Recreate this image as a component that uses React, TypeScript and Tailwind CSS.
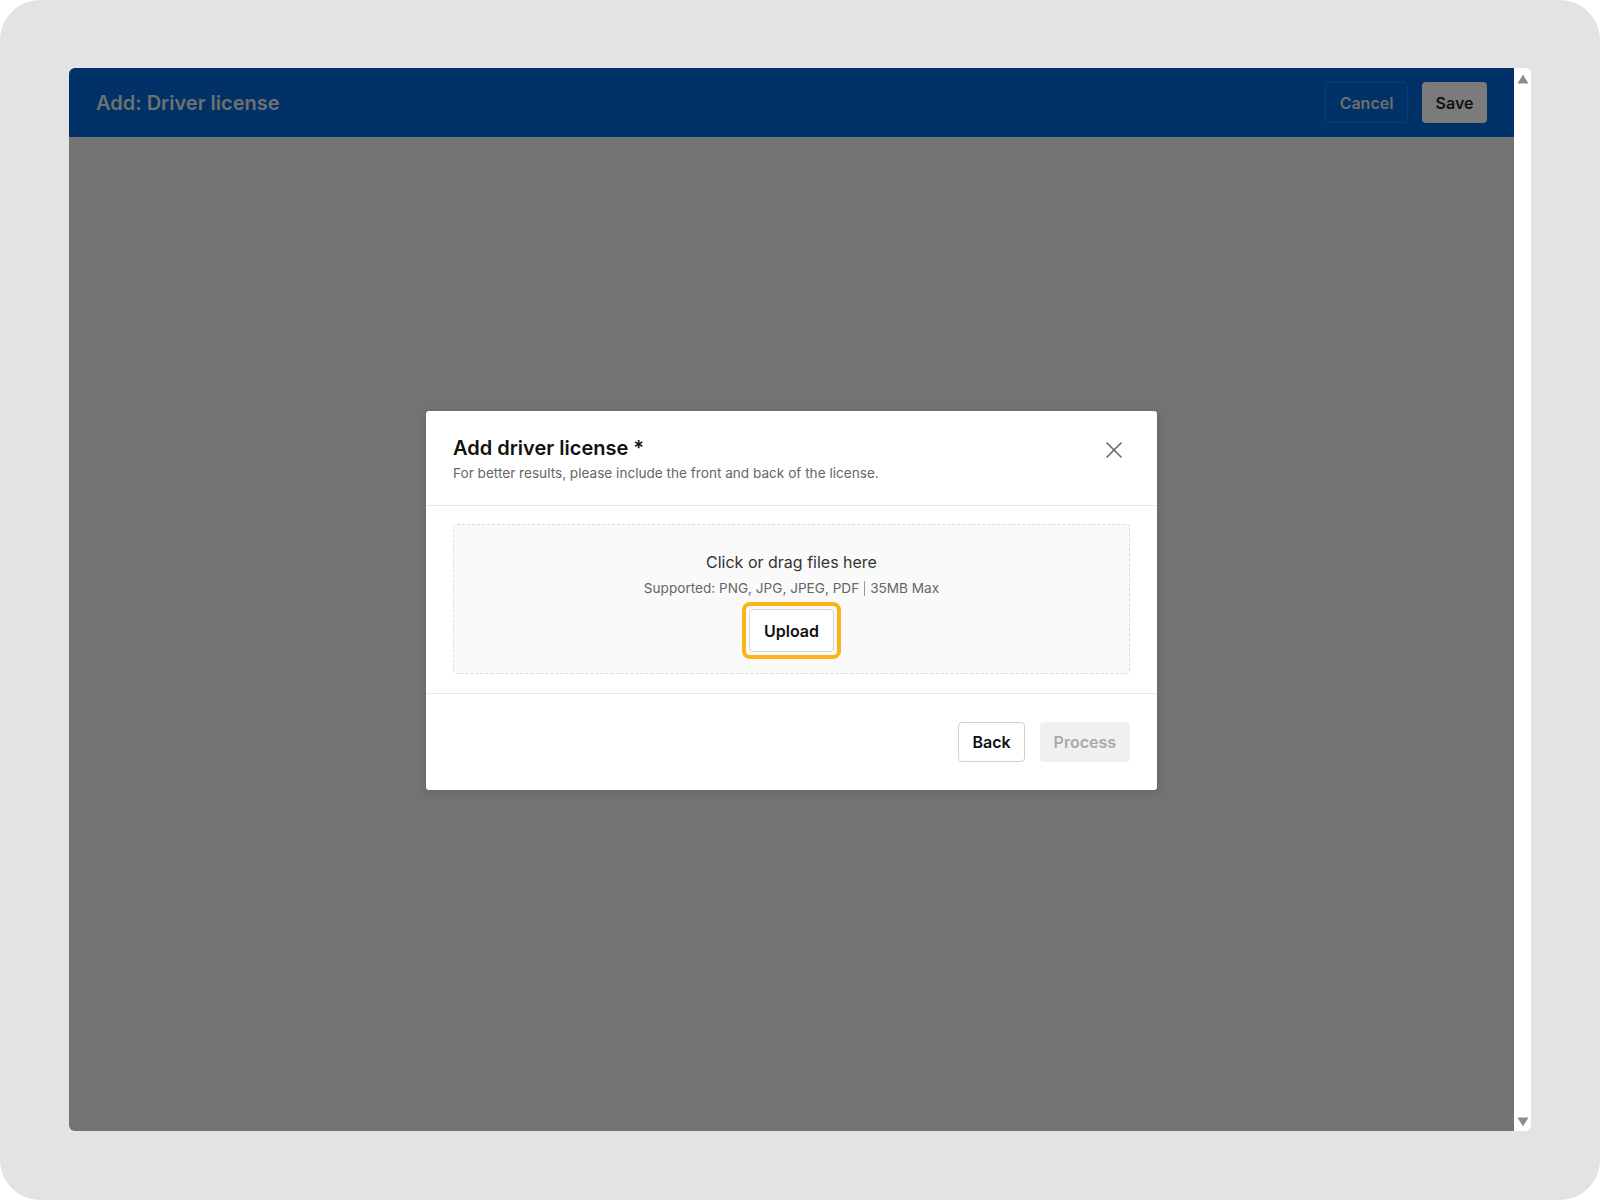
import { X } from "lucide-react";

function Scrollbar() {
  return (
    <div className="w-[17px] bg-white rounded-r-[6px] flex flex-col items-center justify-between pt-[6px] pb-[4px]">
      <svg width="12" height="10" viewBox="0 0 12 10">
        <path d="M6 0.5 L11.5 9.5 L0.5 9.5 Z" fill="#8c8c8c" />
      </svg>
      <svg width="12" height="10" viewBox="0 0 12 10">
        <path d="M0.5 0.5 L11.5 0.5 L6 9.5 Z" fill="#8c8c8c" />
      </svg>
    </div>
  );
}

function UploadModal() {
  return (
    <div className="w-[731px] bg-white rounded-[3px] shadow-[0_2px_8px_rgba(0,0,0,0.15)]">
      {/* Header */}
      <div className="flex items-start justify-between pl-[27px] pr-[29px] pt-[23px] pb-[23px] border-b border-[#e9e9e9]">
        <div>
          <h2 className="text-[20px] leading-[28px] font-semibold text-[#111]">
            Add driver license *
          </h2>
          <p className="mt-[2px] text-[13.6px] leading-[18px] text-[#666]">
            For better results, please include the front and back of the license.
          </p>
        </div>
        <button className="mt-[2px] text-[#666]">
          <X className="w-[28px] h-[28px]" strokeWidth={1.4} />
        </button>
      </div>

      {/* Body */}
      <div className="px-[27px] pt-[18px] pb-[19px] border-b border-[#e9e9e9]">
        <div className="h-[150px] bg-[#fafafa] border border-dashed border-[#dcdcdc] rounded-[4px] flex flex-col items-center pt-[25px]">
          <div className="text-[16px] leading-[24px] text-[#333]">
            Click or drag files here
          </div>
          <div className="mt-[5px] text-[13.6px] leading-[18px] text-[#666] flex items-center">
            <span>Supported: PNG, JPG, JPEG, PDF</span>
            <span className="mx-[5px] w-px h-[15px] bg-[#999]" />
            <span>35MB Max</span>
          </div>
          <div className="mt-[5px] border-[4px] border-[#fbb417] rounded-[8px] p-[3px]">
            <button className="h-[43px] px-[14px] bg-white border border-[#d6d6d6] rounded-[4px] text-[16px] font-semibold text-[#111]">
              Upload
            </button>
          </div>
        </div>
      </div>

      {/* Footer */}
      <div className="flex justify-end gap-[15px] px-[27px] pt-[28px] pb-[28px]">
        <button className="h-[40px] px-[13px] bg-white border border-[#cfcfcf] rounded-[4px] text-[16px] font-semibold text-[#111]">
          Back
        </button>
        <button className="h-[40px] px-[14px] bg-[#f0f0f0] rounded-[4px] text-[16px] font-semibold text-[#aaaaaa]">
          Process
        </button>
      </div>
    </div>
  );
}

export default function App() {
  return (
    <div
      className="w-[1600px] h-[1200px] bg-white"
      style={{ fontFamily: "Inter, 'Noto Sans', sans-serif" }}
    >
      <div className="w-full h-full bg-[#e3e3e3] rounded-[40px] pt-[68px] pb-[69px] px-[69px] flex">
        <div className="flex-1 flex flex-col rounded-l-[6px] overflow-hidden">
          {/* Top bar */}
          <header className="h-[69px] bg-[#003268] flex items-center justify-between px-[27px]">
            <h1 className="text-[20px] font-semibold text-[#707070]">
              Add: Driver license
            </h1>
            <div className="flex items-center gap-[14px]">
              <button className="h-[41px] w-[83px] border border-[#0d3d72] rounded-[4px] text-[16px] font-semibold text-[#6f6f6f]">
                Cancel
              </button>
              <button className="h-[41px] w-[65px] bg-[#7b7b7b] rounded-[4px] text-[16px] font-semibold text-[#111]">
                Save
              </button>
            </div>
          </header>

          {/* Dimmed content */}
          <div className="flex-1 bg-[#737373] flex justify-center items-start pt-[274px]">
            <UploadModal />
          </div>
        </div>
        <Scrollbar />
      </div>
    </div>
  );
}
